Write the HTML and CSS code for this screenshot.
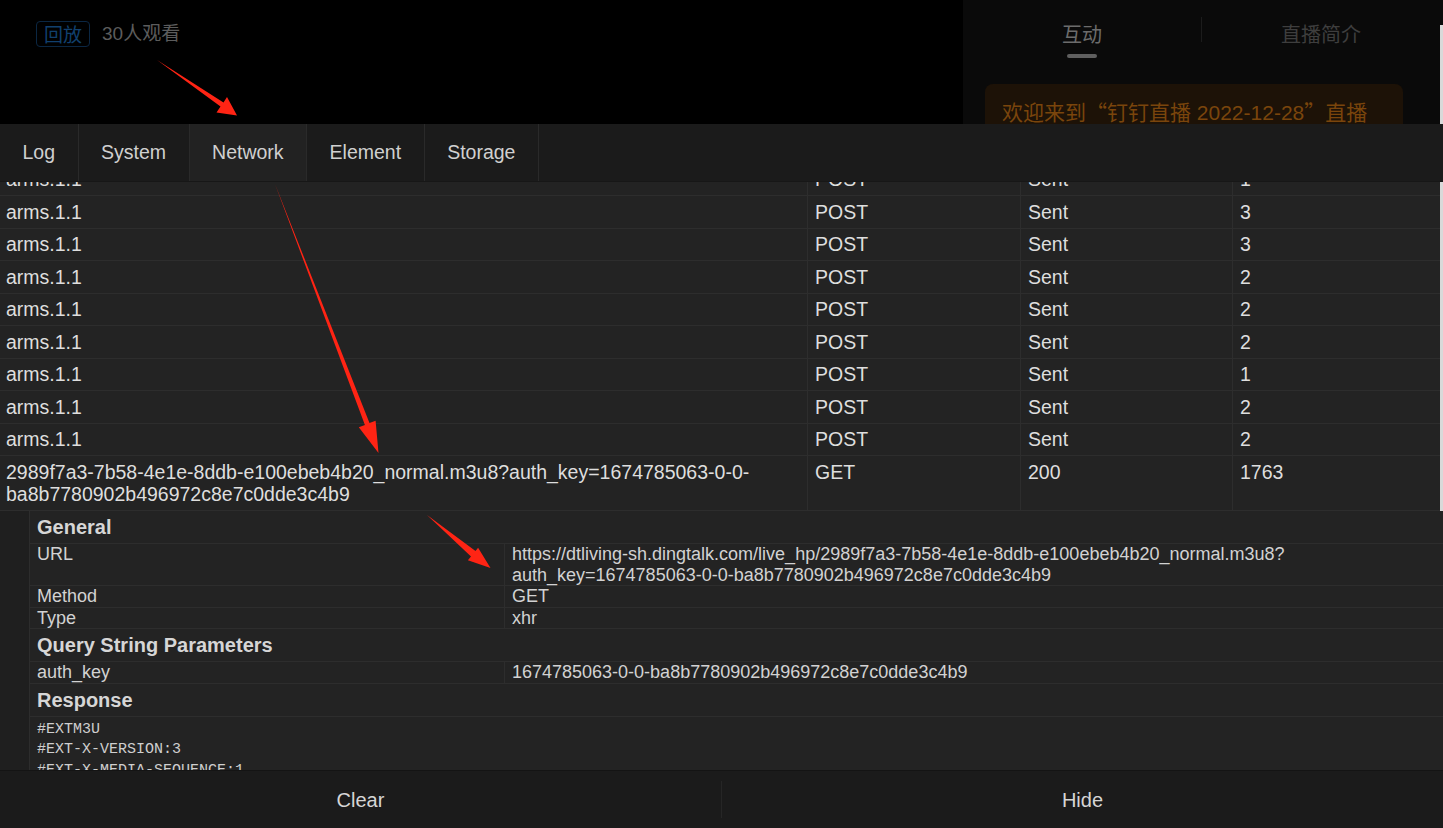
FILE: index.html
```html
<!DOCTYPE html>
<html lang="zh">
<head>
<meta charset="utf-8">
<title>vConsole Network</title>
<link rel="stylesheet" href="styles.css">
</head>
<body>
<div class="page">
  <header class="top">
    <div class="live-info">
      <span class="badge">回放</span>
      <span class="viewers">30人观看</span>
    </div>
    <aside class="side">
      <nav class="side-tabs">
        <div class="side-tab active">互动<span class="indicator"></span></div>
        <div class="side-divider"></div>
        <div class="side-tab dim">直播简介</div>
      </nav>
      <div class="welcome">欢迎来到<span class="cjk">“</span>钉钉直播 2022-12-28<span class="cjk">”</span>直播</div>
    </aside>
    <div class="edge"></div>
  </header>

  <section class="console">
    <nav class="tabbar">
      <div class="tab">Log</div>
      <div class="tab">System</div>
      <div class="tab active">Network</div>
      <div class="tab">Element</div>
      <div class="tab">Storage</div>
    </nav>

    <div class="content">
      <div class="list">
        <div class="row"><div class="cell name">arms.1.1</div><div class="cell">POST</div><div class="cell">Sent</div><div class="cell">1</div></div>
        <div class="row"><div class="cell name">arms.1.1</div><div class="cell">POST</div><div class="cell">Sent</div><div class="cell">3</div></div>
        <div class="row"><div class="cell name">arms.1.1</div><div class="cell">POST</div><div class="cell">Sent</div><div class="cell">3</div></div>
        <div class="row"><div class="cell name">arms.1.1</div><div class="cell">POST</div><div class="cell">Sent</div><div class="cell">2</div></div>
        <div class="row"><div class="cell name">arms.1.1</div><div class="cell">POST</div><div class="cell">Sent</div><div class="cell">2</div></div>
        <div class="row"><div class="cell name">arms.1.1</div><div class="cell">POST</div><div class="cell">Sent</div><div class="cell">2</div></div>
        <div class="row"><div class="cell name">arms.1.1</div><div class="cell">POST</div><div class="cell">Sent</div><div class="cell">1</div></div>
        <div class="row"><div class="cell name">arms.1.1</div><div class="cell">POST</div><div class="cell">Sent</div><div class="cell">2</div></div>
        <div class="row"><div class="cell name">arms.1.1</div><div class="cell">POST</div><div class="cell">Sent</div><div class="cell">2</div></div>
        <div class="row"><div class="cell name">2989f7a3-7b58-4e1e-8ddb-e100ebeb4b20_normal.m3u8?auth_key=1674785063-0-0-<br>ba8b7780902b496972c8e7c0dde3c4b9</div><div class="cell">GET</div><div class="cell">200</div><div class="cell">1763</div></div>
      </div>

      <div class="detail">
        <div class="gutter"></div>
        <div class="detail-body">
          <div class="d-head">General</div>
          <div class="d-row"><div class="d-key">URL</div><div class="d-val">https://dtliving-sh.dingtalk.com/live_hp/2989f7a3-7b58-4e1e-8ddb-e100ebeb4b20_normal.m3u8?<br>auth_key=1674785063-0-0-ba8b7780902b496972c8e7c0dde3c4b9</div></div>
          <div class="d-row"><div class="d-key">Method</div><div class="d-val">GET</div></div>
          <div class="d-row"><div class="d-key">Type</div><div class="d-val">xhr</div></div>
          <div class="d-head">Query String Parameters</div>
          <div class="d-row"><div class="d-key">auth_key</div><div class="d-val">1674785063-0-0-ba8b7780902b496972c8e7c0dde3c4b9</div></div>
          <div class="d-head">Response</div>
          <pre class="resp">#EXTM3U
#EXT-X-VERSION:3
#EXT-X-MEDIA-SEQUENCE:1
#EXT-X-TARGETDURATION:10</pre>
        </div>
      </div>
    </div>

    <footer class="toolbar">
      <div class="btn">Clear</div>
      <div class="btn-sep"></div>
      <div class="btn">Hide</div>
    </footer>
  </section>

  <svg class="annot" width="1443" height="828" viewBox="0 0 1443 828" aria-hidden="true">
    <polygon points="157,60 223.5,102.5 227,97 237,115.5 216.5,112.5 220.5,106.5" />
    <polygon points="275,184 369.5,423 375.6,420.8 378.5,453 358.8,427.2 364.9,424.9" />
    <polygon points="427,515 475.5,551 478.1,547.8 490.5,568 467.9,560.2 471,556.5" />
  </svg>
</div>
</body>
</html>
```

FILE: styles.css
```css
* { box-sizing: border-box; }

html, body {
  margin: 0;
  padding: 0;
  background: #000;
}

.page {
  position: relative;
  width: 1443px;
  height: 828px;
  overflow: hidden;
  display: flex;
  flex-direction: column;
  font-family: Arial, "Liberation Sans", "Noto Sans CJK SC", sans-serif;
}

/* ---------- top (page behind console) ---------- */
.top {
  height: 124px;
  display: flex;
  flex-shrink: 0;
}

.live-info {
  width: 963px;
  padding: 21px 0 0 36px;
  display: flex;
  align-items: flex-start;
  gap: 12px;
  background: #000;
}

.badge {
  height: 26px;
  width: 54px;
  text-align: center;
  border: 1px solid #0b2743;
  border-radius: 4px;
  color: #11406e;
  font-family: "Noto Sans CJK SC", sans-serif;
  font-size: 19px;
  line-height: 23px;
}

.viewers {
  color: #5c5c5c;
  font-family: "Liberation Sans", "Noto Sans CJK SC", sans-serif;
  font-size: 19px;
  line-height: 26px;
}

.side {
  flex: 1;
  background: #0a0a0a;
  display: flex;
  flex-direction: column;
  overflow: hidden;
}

.side-tabs {
  height: 62px;
  flex-shrink: 0;
  display: flex;
  align-items: flex-start;
  padding-top: 17px;
}

.side-tab {
  flex: 1;
  text-align: center;
  font-family: "Noto Sans CJK SC", sans-serif;
  font-size: 20px;
  line-height: 34px;
  color: #6c6c6c;
  display: flex;
  flex-direction: column;
  align-items: center;
}

.side-tab.dim { color: #3e3e3e; }

.indicator {
  width: 30px;
  height: 4px;
  border-radius: 2px;
  background: #5f5f5f;
  margin-top: 3px;
}

.side-divider {
  width: 1px;
  height: 25px;
  background: #1c1c1c;
}

.welcome {
  margin: 22px 37px 0 22px;
  height: 60px;
  flex-shrink: 0;
  padding: 12px 17px;
  border-radius: 8px;
  background: #1d1207;
  color: #7a450c;
  font-family: "Liberation Sans", "Noto Sans CJK SC", sans-serif;
  font-size: 21px;
  line-height: 30px;
  white-space: nowrap;
}

.welcome .cjk {
  font-family: "Noto Sans CJK SC", sans-serif;
}

.edge {
  width: 3px;
  background: linear-gradient(#0a0a0a 0 25px, #d9d9d9 25px);
}

/* ---------- console ---------- */
.console {
  flex: 1;
  display: flex;
  flex-direction: column;
  background: #232323;
  color: #dcdcdc;
  min-height: 0;
}

.tabbar {
  height: 58px;
  flex-shrink: 0;
  display: flex;
  background: #1b1b1b;
  border-bottom: 1px solid #171717;
}

.tab {
  padding: 0 22.5px;
  border-right: 1px solid #2a2a2a;
  font-size: 19.5px;
  line-height: 57px;
  color: #d0d0d0;
}

.tab.active { background: #222; }

.content {
  flex: 1;
  min-height: 0;
  overflow: hidden;
}

.list {
  margin-top: -18.5px;
  margin-right: 3px;
  box-shadow: 3px 0 0 #d9d9d9;
}

.row {
  display: grid;
  grid-template-columns: 807px 213px 212px 1fr;
  border-bottom: 1px solid #2d2d2d;
}

.cell {
  padding: 4.5px 7px;
  font-size: 19.5px;
  line-height: 22.5px;
  color: #dedede;
  border-left: 1px solid #2d2d2d;
  white-space: nowrap;
}

.cell.name {
  border-left: 0;
  padding-left: 6px;
}

/* ---------- detail ---------- */
.detail {
  display: flex;
  background: #232323;
}

.gutter {
  width: 30px;
  flex-shrink: 0;
  background: #1f1f1f;
  border-right: 1px solid #2d2d2d;
}

.detail-body {
  flex: 1;
  min-width: 0;
}

.d-head {
  padding: 0 7px;
  font-size: 20px;
  font-weight: bold;
  line-height: 32px;
  color: #d6d6d6;
  border-bottom: 1px solid #2d2d2d;
}

.d-row {
  display: grid;
  grid-template-columns: 475px 1fr;
  border-bottom: 1px solid #2d2d2d;
}

.d-key, .d-val {
  font-size: 18px;
  line-height: 20.5px;
  color: #d2d2d2;
  padding: 0 6px 0 7px;
  white-space: nowrap;
}

.d-key { border-right: 1px solid #2d2d2d; }

.resp {
  margin: 0;
  padding: 3px 7px;
  font-family: "Liberation Mono", "DejaVu Sans Mono", monospace;
  font-size: 15px;
  line-height: 20.5px;
  color: #cfcfcf;
}

/* ---------- toolbar ---------- */
.toolbar {
  height: 58px;
  flex-shrink: 0;
  display: flex;
  align-items: center;
  background: #1b1b1b;
  border-top: 1px solid #141414;
}

.btn {
  flex: 1;
  text-align: center;
  font-size: 20px;
  color: #d6d6d6;
  line-height: 56px;
}

.btn-sep {
  width: 1px;
  height: 37px;
  background: #262626;
}

/* ---------- annotation arrows ---------- */
.annot {
  position: absolute;
  left: 0;
  top: 0;
  pointer-events: none;
}

.annot polygon { fill: #ff2414; }
```
